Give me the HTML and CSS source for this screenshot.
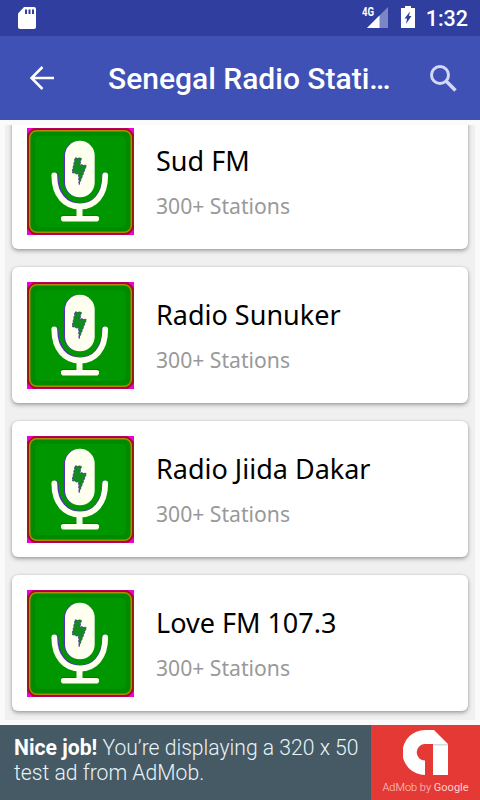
FILE: index.html
```html
<!doctype html>
<html lang="en">
<head>
    <meta charset="utf-8">
    <title>Senegal Radio Stations</title>
    <link rel="stylesheet" href="styles.css">
</head>
<body>
    <!-- station logo, reused in every card -->
    <svg class="defs" width="0" height="0">
        <symbol id="mic" viewBox="0 0 107 107">
            <rect width="107" height="107" fill="#b8005c"/>
            <path d="M0 0h6L0 6zM107 0v6l-6-6zM0 107v-6l6 6zM107 107h-6l6-6z" fill="#f000d8"/>
            <rect x="1" y="1" width="105" height="105" rx="8" fill="#941800"/>
            <rect x="2.700" y="2.700" width="101.600" height="101.600" rx="7" fill="#008a00" stroke="#b08a00" stroke-width="1.500"/>
            <rect x="8" y="8" width="91" height="91" rx="5" fill="#009600"/>
            <rect x="36.800" y="13" width="30" height="56" rx="15" fill="#5530c0"/>
            <rect x="38" y="12.800" width="29.700" height="56.500" rx="14.800" fill="#fffff0"/>
            <path d="M29 47c0 19 11 30.500 24.500 30.500S77.500 66 77.500 47" fill="none" stroke="#5530c0" stroke-width="5" stroke-linecap="round"/>
            <path d="M27.300 47.500c0 20 11 31 25.700 31S78.200 67.500 78.200 47.500" fill="none" stroke="#fffff0" stroke-width="5.800" stroke-linecap="round"/>
            <path d="M34 87.500h38" stroke="#5530c0"/>
            <path d="M49.500 79h6v9H70l2 1v3l-1.500 1.500h-35L34 92v-3l2-1h13.500z" fill="#fffff0"/>
            <path d="M48 30h6.500l-1.500 6.500 6.500 1L52 57l-.5-10.500-6.500-2z" fill="#128a20" stroke="#5040a0" stroke-width=".9" stroke-dasharray="2 1.500"/>
        </symbol>
    </svg>

    <div class="status-bar">
        <svg class="sd" width="18" height="22" viewBox="0 0 18 22">
            <path d="M6 0h10q2 0 2 2v18q0 2-2 2H2q-2 0-2-2V6.500z" fill="#fff"/>
            <path d="M7 2.500h2V7H7zM10.500 2.500h2V7h-2zM14 2.500h2V7h-2z" fill="#303f9f"/>
        </svg>
        <div class="network">
            <span>4G</span>
            <svg width="21" height="21" viewBox="0 0 21 21">
                <path d="M0 21L21 0v21z" fill="#7d86c5"/>
                <path d="M0 21L12.500 8.500V21z" fill="#fff"/>
            </svg>
        </div>
        <svg class="battery" width="14" height="22" viewBox="0 0 14 22">
            <path d="M4 0h6v2h4v20H0V2h4z" fill="#fff"/>
            <path d="M9 5.500L8 10h2.500L5 18l1-5.500H3.500z" fill="#303f9f"/>
        </svg>
        <span class="clock">1:32</span>
    </div>

    <div class="toolbar">
        <svg class="back" width="24" height="24" viewBox="0 0 24 24">
            <path d="M24 12H2M12.500 1L1.500 12l11 11" fill="none" stroke="#fff" stroke-width="2.500"/>
        </svg>
        <h1>Senegal Radio Stati…</h1>
        <svg class="search" width="27" height="27" viewBox="0 0 27 27">
            <circle cx="10" cy="10" r="8.500" fill="none" stroke="#d3d8f3" stroke-width="3"/>
            <path d="M16.300 16.300l9.200 9.200" stroke="#d3d8f3" stroke-width="3.500"/>
        </svg>
    </div>

    <div class="list">
        <div class="card">
            <svg class="logo"><use href="#mic"/></svg>
            <div class="info">
                <h2>Sud FM</h2>
                <p>300+ Stations</p>
            </div>
        </div>
        <div class="card">
            <svg class="logo"><use href="#mic"/></svg>
            <div class="info">
                <h2>Radio Sunuker</h2>
                <p>300+ Stations</p>
            </div>
        </div>
        <div class="card">
            <svg class="logo"><use href="#mic"/></svg>
            <div class="info">
                <h2>Radio Jiida Dakar</h2>
                <p>300+ Stations</p>
            </div>
        </div>
        <div class="card">
            <svg class="logo"><use href="#mic"/></svg>
            <div class="info">
                <h2>Love FM 107.3</h2>
                <p>300+ Stations</p>
            </div>
        </div>
    </div>

    <div class="ad">
        <p class="ad-text"><b>Nice job!</b> You’re displaying a 320 x 50<br>test ad from AdMob.</p>
        <div class="admob">
            <svg width="45" height="45" viewBox="0 0 45 45">
                <path d="M22 0h9l14 14v31H30V14h-8a8.300 8.300 0 0 0 0 16.600V45A22.500 22.500 0 0 1 22 0z" fill="#fff"/>
                <path d="M30 14h15v1.500H30z" fill="#d5dadd"/>
            </svg>
            <span>AdMob by <b>Google</b></span>
        </div>
    </div>
</body>
</html>
```

FILE: styles.css
```css
body {
    margin: 0;
    width: 480px;
    height: 800px;
    overflow: hidden;
    display: flex;
    flex-direction: column;
    background-color: #fafafa;
    font-family: Roboto, "Liberation Sans", sans-serif;
}
h1, h2, p {
    margin: 0;
    font-weight: normal;
    white-space: nowrap;
}
svg {
    display: block;
    flex: none;
}
.defs {
    position: absolute;
}

.status-bar {
    flex: none;
    box-sizing: border-box;
    height: 36px;
    padding: 0 12px 0 18px;
    display: flex;
    align-items: center;
    background-color: #303f9f;
    color: #fff;
}
.sd {
    margin-right: auto;
}
.network {
    display: flex;
    align-items: flex-start;
    margin: -1px 13px 0 0;
}
.network svg {
    margin-left: -8px;
}
.network span {
    font-size: 12px;
    line-height: 11px;
    font-weight: bold;
    width: 13px;
    transform: scaleX(0.8);
    transform-origin: left;
}
.battery {
    margin: -2px 11px 0 0;
}
.clock {
    font-size: 21.500px;
    font-weight: 500;
    line-height: 36px;
    margin-top: 1px;
}

.toolbar {
    flex: none;
    box-sizing: border-box;
    height: 84px;
    padding: 0 23px 0 30px;
    display: flex;
    align-items: center;
    background-color: #3f51b5;
    color: #fff;
}
.toolbar h1 {
    margin: 2px auto 0 54px;
    font-size: 30px;
    line-height: 36px;
    font-weight: 500;
}

.list {
    flex: none;
    box-sizing: border-box;
    height: 595px;
    margin: 5px 5px;
    padding: 0 7px;
    overflow: hidden;
    display: flex;
    flex-direction: column;
    gap: 18px;
    background-color: #f0f0f0;
}
.card {
    flex: none;
    box-sizing: border-box;
    height: 136px;
    padding: 14.500px 15px 14.500px 14.500px;
    display: flex;
    background-color: #fff;
    border-radius: 6px;
    box-shadow: 0 2px 4px rgba(0, 0, 0, 0.32), 0 0 2px rgba(0, 0, 0, 0.15);
}
/* the list is scrolled a little past its first card */
.card:first-child {
    margin-top: -12px;
}
.logo {
    width: 107px;
    height: 107px;
}
.info {
    margin-left: 22.500px;
    padding-top: 13.500px;
    font-family: "Noto Sans", sans-serif;
}
.info h2 {
    font-size: 27px;
    line-height: 40px;
    color: #000;
}
.info p {
    margin-top: 9px;
    font-size: 21.150px;
    line-height: 32px;
    color: #999;
}

.ad {
    flex: none;
    height: 75px;
    display: flex;
    background-color: #455a64;
}
.ad-text {
    width: 357px;
    padding: 10px 0 0 14px;
    font-size: 21.150px;
    line-height: 25px;
    font-weight: 300;
    color: #e8f4f8;
}
.ad-text b {
    font-weight: bold;
    color: #fff;
}
.admob {
    width: 109px;
    display: flex;
    flex-direction: column;
    align-items: center;
    background-color: #e53935;
}
.admob svg {
    margin-top: 5px;
}
.admob span {
    margin-top: 5px;
    font-size: 11px;
    line-height: 16px;
    font-weight: 300;
    white-space: nowrap;
    color: #ffd0ce;
}
.admob b {
    font-weight: 400;
}
```
